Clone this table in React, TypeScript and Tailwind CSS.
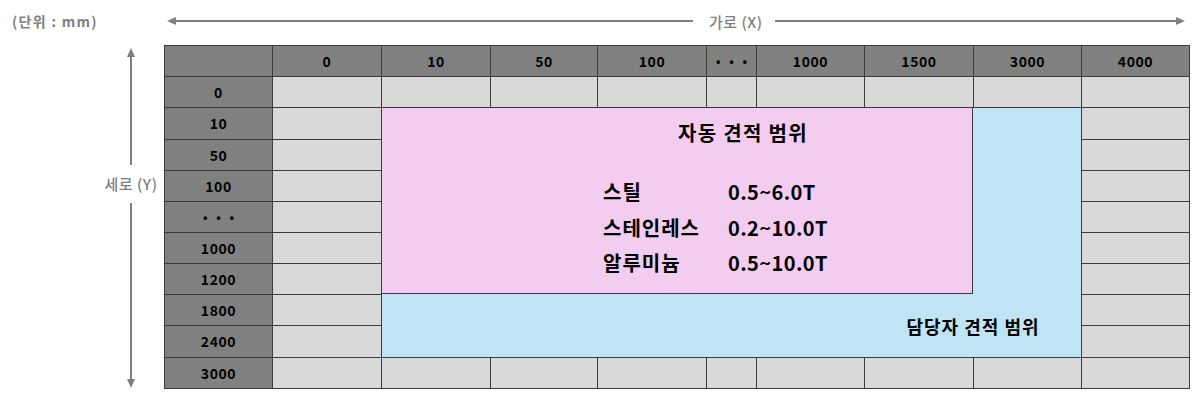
import React from 'react';

const cols = ['', '0', '10', '50', '100', '• • •', '1000', '1500', '3000', '4000'];
const rows = ['0', '10', '50', '100', '• • •', '1000', '1200', '1800', '2400', '3000'];

// cells under the quote areas (row index in data rows, col index in cols)
const isCovered = (r: number, c: number) => r >= 1 && r <= 8 && c >= 2 && c <= 8;

const materials = [
  { name: '스틸', range: '0.5~6.0T' },
  { name: '스테인레스', range: '0.2~10.0T' },
  { name: '알루미늄', range: '0.5~10.0T' },
];

function ArrowHead({ dir }: { dir: 'left' | 'right' | 'up' | 'down' }) {
  const pts = {
    left: '0,4 9,0 9,8',
    right: '9,4 0,0 0,8',
    up: '4,0 0,9 8,9',
    down: '4,9 0,0 8,0',
  }[dir];
  const vertical = dir === 'up' || dir === 'down';
  return (
    <svg width={vertical ? 8 : 9} height={vertical ? 9 : 8} className="shrink-0">
      <polygon points={pts} fill="#808080" />
    </svg>
  );
}

function HeadCell({ text }: { text: string }) {
  const dots = text.startsWith('•');
  return (
    <div className="bg-[#808080] flex items-center justify-center">
      <span className={dots ? 'text-[12px] tracking-[3px] pl-[3px]' : 'tracking-[0.6px]'}>{text}</span>
    </div>
  );
}

export default function App() {
  return (
    <div
      className="w-[1200px] h-[404px] bg-white flex flex-col"
      style={{ fontFamily: '"Noto Sans CJK KR", "Noto Sans", sans-serif' }}
    >
      {/* top bar */}
      <div className="flex items-center h-[45px] pb-[3px]">
        <div className="w-[167px] pl-[12px] text-[14px] font-bold tracking-[1.3px] text-[#808080]">(단위 : mm)</div>
        <div className="flex items-center w-[1018px]">
          <ArrowHead dir="left" />
          <div className="w-[517px] h-[2px] bg-[#808080]" />
          <span className="pl-[16px] pr-[12px] text-[15px] font-medium tracking-[0.5px] text-[#808080] leading-none">가로 (X)</span>
          <div className="flex-1 h-[2px] bg-[#808080]" />
          <ArrowHead dir="right" />
        </div>
      </div>

      <div className="flex">
        {/* vertical axis */}
        <div className="w-[164px] flex">
          <div className="ml-[101px] w-[60px] h-[340px] mt-[3px] flex flex-col items-center">
            <ArrowHead dir="up" />
            <div className="w-[2px] h-[108px] bg-[#808080]" />
            <span className="py-[9px] text-[15px] font-medium tracking-[0.5px] text-[#808080] leading-[20px] whitespace-nowrap">세로 (Y)</span>
            <div className="w-[2px] flex-1 bg-[#808080]" />
            <ArrowHead dir="down" />
          </div>
        </div>

        {/* table */}
        <div className="grid grid-cols-[107px_108px_108px_106px_108px_49px_107px_108px_107px_107px] grid-rows-[30px_30px_31px_30px_30px_30px_30px_30px_30px_31px_30px] gap-px bg-[#3c3c3c] border border-[#3c3c3c] text-[14px] font-bold text-black">
          <div className="col-start-3 col-end-10 row-start-3 row-end-11 bg-[#c0e4f4]" />
          <div className="col-start-3 col-end-9 row-start-3 row-end-9 bg-[#f2cdef] border-r border-b border-[#3c3c3c] flex flex-col pl-[221px] pt-[12px]">
            <div className="ml-[75px] text-[20px] leading-[26px] tracking-[1.3px]">자동 견적 범위</div>
            <div className="mt-[28px] flex flex-col">
              {materials.map((m) => (
                <div key={m.name} className="flex text-[20px] leading-[35.5px]">
                  <span className="w-[125px] tracking-[1px]">{m.name}</span>
                  <span className="tracking-[0.4px]">{m.range}</span>
                </div>
              ))}
            </div>
          </div>
          <div className="col-start-8 col-end-10 row-start-9 row-end-11 flex items-center justify-center text-[18px] tracking-[1px]">
            담당자 견적 범위
          </div>

          {cols.map((c, i) => (
            <HeadCell key={'h' + i} text={c} />
          ))}
          {rows.map((r, ri) =>
            cols.map((_, ci) => {
              if (isCovered(ri, ci)) return null;
              if (ci === 0) return <HeadCell key={r + ci} text={r} />;
              return <div key={r + ci} className="bg-[#d9d9d9]" />;
            })
          )}
        </div>
      </div>
    </div>
  );
}
